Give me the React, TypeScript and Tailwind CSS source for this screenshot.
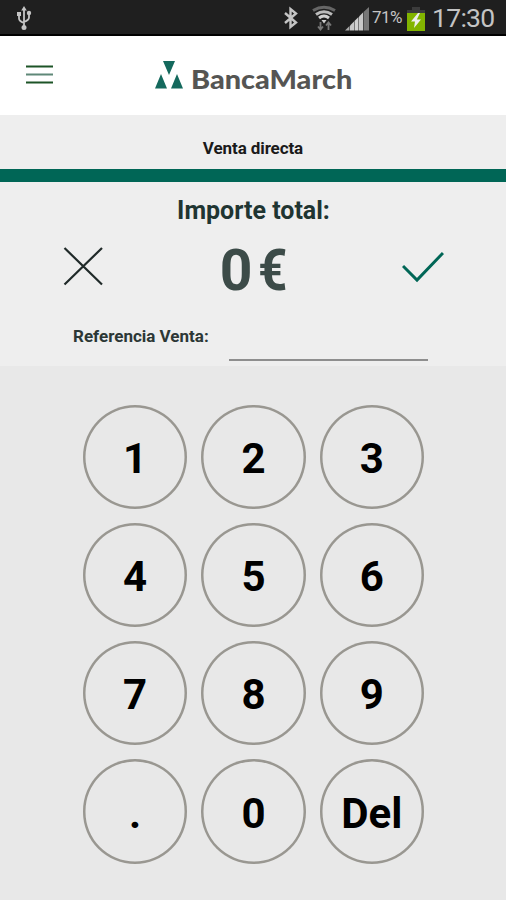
import { useState } from 'react';

const TECLAS = ['1', '2', '3', '4', '5', '6', '7', '8', '9', '.', '0', 'Del'];

function StatusBar() {
  return (
    <div className="flex h-[36px] items-center border-b-2 border-black bg-[#1f1f1f] text-[#c4c4c4]">
      <svg width="18" height="26" viewBox="0 0 18 26" className="ml-[15px] mt-[2px] shrink-0" fill="none" stroke="#c4c4c4" strokeWidth="1.8">
        <path d="M9 4v19M4 9v4.500q0 2.500 5 4.500M14 8v4.500q0 2.500-5 4.500" />
        <path d="M9 1l2.800 4.500H6.200zM2 7h4v4H2z" fill="#c4c4c4" stroke="none" />
        <circle cx="14" cy="8" r="2.200" fill="#c4c4c4" stroke="none" />
        <circle cx="9" cy="22.500" r="2.500" fill="#c4c4c4" stroke="none" />
      </svg>
      <svg width="16" height="24" viewBox="0 0 16 24" className="ml-[250px] mt-[2px] shrink-0" fill="none" stroke="#c4c4c4" strokeWidth="2.400">
        <path d="M2 7l11 9.500-5.500 4.500V3l5.500 4.500L2 17" />
      </svg>
      <svg width="26" height="26" viewBox="0 0 26 26" className="ml-[12px] mt-[2px] shrink-0" fill="none">
        <path d="M2 5.500Q13-1 24 5.500" stroke="#666" strokeWidth="3" />
        <path d="M5 9.500Q13 4 21 9.500" stroke="#bbb" strokeWidth="3" />
        <path d="M8 13Q13 9 18 13" stroke="#d0d0d0" strokeWidth="3" />
        <path d="M10.500 15h5L13 18.500z" fill="#d0d0d0" />
        <path d="M9.500 17v7M7 21.500l2.500 3 2.500-3M17.500 25v-7M15 20.500l2.500-3 2.500 3" stroke="#777" strokeWidth="1.800" />
      </svg>
      <svg width="24" height="24" viewBox="0 0 24 24" className="ml-[8px] mt-[4px] shrink-0">
        <path d="M0 23.500h4.500v-4.500z" fill="#aaa" />
        <path d="M5 23.500h4v-9l-4 4z" fill="#c8c8c8" />
        <path d="M9.500 23.500h4V10l-4 4z" fill="#d0d0d0" />
        <path d="M14 23.500h4V5.500l-4 4z" fill="#c8c8c8" />
        <path d="M18.500 23.500H24V0l-5.500 5z" fill="#777" />
      </svg>
      <span className="ml-[3px] mt-[2px] w-[35px] text-[17px] tracking-[-0.500px]">71%</span>
      <svg width="18" height="24" viewBox="0 0 18 24" className="mt-[3px] shrink-0">
        <path d="M5 0h8v3h5v4H0V3h5z" fill="#3c3c3c" />
        <path d="M0 6h18v18H0z" fill="#82b400" />
        <path d="M11 6L4 14.500h4L7 21l7-8.500h-4.200L13 6z" fill="#eee" />
      </svg>
      <span className="ml-[7px] mt-[2px] text-[26.500px] leading-none tracking-[-0.700px]">17:30</span>
    </div>
  );
}

function Cabecera() {
  return (
    <header className="flex h-[79px] items-center bg-white">
      <button className="ml-[26px] flex w-[27px] -translate-y-[1.500px] flex-col gap-[6px]" aria-label="Menu">
        <span className="h-[2px] bg-[#1d5427]" />
        <span className="h-[2px] bg-[#5f8878]" />
        <span className="h-[2px] bg-[#1d5427]" />
      </button>
      <svg width="28" height="28" viewBox="0 0 28 28" className="-mt-[2px] ml-[102px]" fill="#14695d">
        <path d="M8 0h12L14 14zM0 27.500l6-14.500 6 14.500zM16 27.500l6-14.500 6 14.500z" />
      </svg>
      <span className="ml-[8px] mt-[6px] origin-left scale-x-[1.110] font-[Lato] text-[26px] font-black leading-none text-[#555553]">BancaMarch</span>
    </header>
  );
}

export default function App() {
  const [importe, setImporte] = useState('0');
  const [referencia, setReferencia] = useState('');

  function handleTecla(tecla: string) {
    setImporte(actual => {
      if (tecla === 'Del') return actual.length > 1 ? actual.slice(0, -1) : '0';
      if (tecla === '.') return actual.includes('.') ? actual : actual + '.';
      return actual === '0' ? tecla : actual + tecla;
    });
  }

  return (
    <div className="flex h-[900px] w-[506px] flex-col overflow-hidden bg-[#e8e8e8] font-[Roboto,sans-serif]">
      <StatusBar />
      <Cabecera />

      <div className="flex h-[54px] items-end justify-center bg-[#eee] pb-[10px] text-[17px] font-bold leading-[22px] tracking-[-0.100px] text-[#1a1a1a]">
        Venta directa
      </div>
      <div className="h-[13px] bg-[#006656]" />

      <section className="h-[184px] bg-[#eee]">
        <h1 className="pl-px pt-[14px] text-center text-[25px] font-bold leading-[30px] text-[#1f3532]">Importe total:</h1>

        <div className="mt-[10px] flex h-[66px] items-center justify-between pl-[63px] pr-[62px]">
          <button onClick={() => setImporte('0')} aria-label="Cancelar">
            <svg width="40" height="40" viewBox="0 0 40 40" className="-translate-y-[3px]" fill="none" stroke="#202a29" strokeWidth="2.200">
              <path d="M1.500 2L39 38.500M39 2L1.500 38.500" />
            </svg>
          </button>
          <div className="flex translate-y-px gap-[5px] pl-[5px] text-[57px] font-bold leading-none text-[#3c4b48]">
            <span>{importe}</span>
            <span className="origin-left scale-x-[0.900]">€</span>
          </div>
          <button aria-label="Aceptar">
            <svg width="42" height="32" viewBox="0 0 42 32" className="-translate-y-[2px]" fill="none" stroke="#006656" strokeWidth="3">
              <path d="M1 15l14 14L41 2" />
            </svg>
          </button>
        </div>

        <div className="flex">
          <label htmlFor="referencia" className="ml-[73px] mt-[23px] w-[156px] text-[17px] font-bold leading-[22px] text-[#2c3735]">
            Referencia Venta:
          </label>
          <input
            id="referencia"
            value={referencia}
            onChange={e => setReferencia(e.target.value)}
            className="mt-[27px] h-[32px] w-[199px] border-b-2 border-[#8e8e8e] bg-transparent outline-none"
          />
        </div>
      </section>

      <div className="ml-[83px] mt-[38.500px] grid w-[341px] grid-cols-3 gap-[14px]">
        {TECLAS.map(tecla => (
          <button
            key={tecla}
            onClick={() => handleTecla(tecla)}
            className="flex h-[104.300px] w-[104.300px] items-center justify-center rounded-full pt-[4px] text-[42px] font-bold leading-none text-black shadow-[inset_0_0_0_2.500px_#999791]"
          >
            {tecla}
          </button>
        ))}
      </div>
    </div>
  );
}
